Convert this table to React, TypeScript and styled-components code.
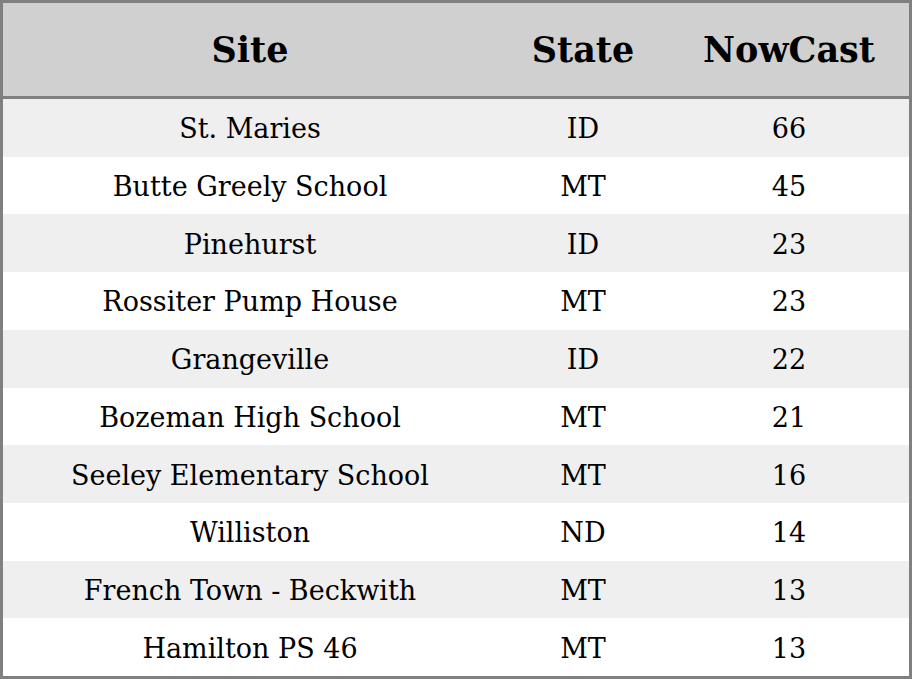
import React from "react";
import styled, { createGlobalStyle } from "styled-components";

const Global = createGlobalStyle`
  html, body { margin: 0; padding: 0; background: #ffffff; }
  body { font-family: "DejaVu Serif", "Liberation Serif", serif; }
`;

const Table = styled.div`
  box-sizing: border-box;
  width: 912px;
  height: 679px;
  border: 3px solid #808080;
  display: flex;
  flex-direction: column;
  background: #ffffff;
`;

const Row = styled.div<{ $head?: boolean; $stripe?: boolean }>`
  display: grid;
  grid-template-columns: 494px 172px 1fr;
  align-items: center;
  height: ${(p) => (p.$head ? "93px" : "auto")};
  flex: ${(p) => (p.$head ? "0 0 auto" : "1 1 0")};
  background: ${(p) => (p.$head ? "#d0d0d0" : p.$stripe ? "#efefef" : "#ffffff")};
  border-bottom: ${(p) => (p.$head ? "3px solid #808080" : "none")};
`;

const Cell = styled.div<{ $head?: boolean }>`
  text-align: center;
  color: #000;
  font-size: ${(p) => (p.$head ? "35px" : "27px")};
  font-weight: ${(p) => (p.$head ? 700 : 400)};
  line-height: 1;
  padding-top: ${(p) => (p.$head ? "0" : "2px")};
  white-space: nowrap;
`;

const data: [string, string, number][] = [
  ["St. Maries", "ID", 66],
  ["Butte Greely School", "MT", 45],
  ["Pinehurst", "ID", 23],
  ["Rossiter Pump House", "MT", 23],
  ["Grangeville", "ID", 22],
  ["Bozeman High School", "MT", 21],
  ["Seeley Elementary School", "MT", 16],
  ["Williston", "ND", 14],
  ["French Town - Beckwith", "MT", 13],
  ["Hamilton PS 46", "MT", 13],
];

export default function App() {
  return (
    <>
      <Global />
      <Table>
        <Row $head>
          <Cell $head>Site</Cell>
          <Cell $head>State</Cell>
          <Cell $head>NowCast</Cell>
        </Row>
        {data.map(([site, st, v], i) => (
          <Row key={i} $stripe={i % 2 === 0}>
            <Cell>{site}</Cell>
            <Cell>{st}</Cell>
            <Cell>{v}</Cell>
          </Row>
        ))}
      </Table>
    </>
  );
}
